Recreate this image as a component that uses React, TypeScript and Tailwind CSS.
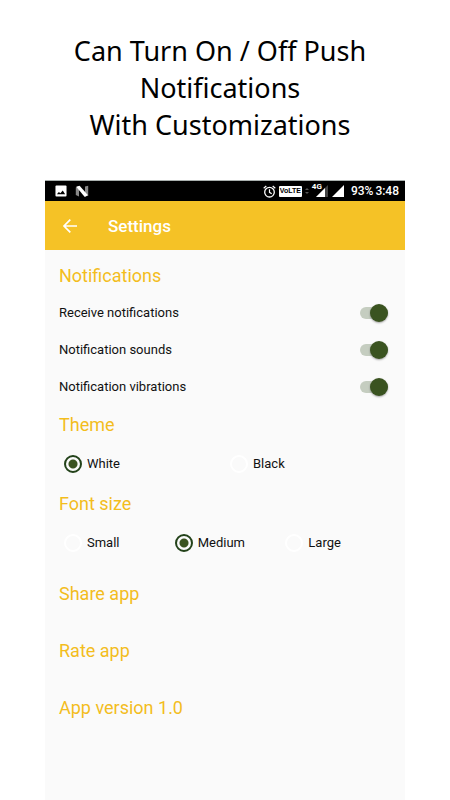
import { useState } from "react";

const SWITCHES = ["Receive notifications", "Notification sounds", "Notification vibrations"];

const StatusBar = () => (
  <div className="flex h-[21px] items-center border-t border-[#a9b0ae] bg-black pl-[10px] pr-[6px] text-white">
    <svg className="h-[12px] w-[12px]" viewBox="0 0 13 13" aria-hidden="true">
      <rect x="0.5" y="0.5" width="12" height="12" rx="1" fill="#fff" />
      <path d="M2 10 4.2 7.5 5.8 9 8.4 6 11 10z" fill="#000" />
    </svg>
    <svg className="ml-2 h-[13px] w-[14px]" viewBox="0 0 14 13" aria-hidden="true">
      <path d="M0.8 2.5 4 1V11.5L0.8 10zM10 1.5 13.2 0.8V11L10 9z" fill="#888" />
      <path d="M1.2 1.8 4.6 0.8 13 10.3 9.8 12z" fill="#fff" />
    </svg>
    <svg className="ml-auto h-[13px] w-[13px]" viewBox="0 0 13 13" fill="none" stroke="#fff" aria-hidden="true">
      <circle cx="6.5" cy="7.2" r="4.8" strokeWidth="1.3" />
      <path d="M6.5 4.3V7.3L8.7 8.7M0.7 3.2 3.3 1M12.3 3.2 9.7 1" strokeWidth="1.2" />
    </svg>
    <span className="ml-[3px] flex h-[11px] w-[23px] items-center justify-center rounded-[1px] bg-white font-['Liberation_Sans',sans-serif] text-[7px] font-bold text-black">
      VoLTE
    </span>
    <svg className="ml-[3px] h-[6px] w-[4px]" viewBox="0 0 4 6" fill="#555" aria-hidden="true">
      <path d="M2 0 4 2H0zM2 6 0 4h4z" />
    </svg>
    <span className="ml-[3px] self-start pt-[2px] text-[8px] leading-[8px] font-bold">4G</span>
    <svg className="-ml-1.5 h-[12px] w-[12px]" viewBox="0 0 12 12" aria-hidden="true">
      <path d="M0 12 12 0V12z" fill="#444" />
      <path d="M0 12 9 3V12z" fill="#fff" />
    </svg>
    <svg className="ml-1 h-[12px] w-[12px]" viewBox="0 0 12 12" aria-hidden="true">
      <path d="M0 12 12 0V12z" fill="#fff" />
    </svg>
    <span className="ml-[7px] text-[12px] font-medium">93%</span>
    <span className="ml-[2px] text-[12px] font-medium">3:48</span>
  </div>
);

const SectionTitle = ({ children }: { children: string }) => (
  <h2 className="flex h-[38px] items-center text-[18px] text-[#f3bd1d]">{children}</h2>
);

const SwitchRow = ({ label }: { label: string }) => {
  const [on, setOn] = useState(true);

  return (
    <label className="flex h-[37px] items-center justify-between pr-[3px] text-[13px]">
      {label}
      <span className="relative flex h-[18px] w-7 items-center">
        <input
          type="checkbox"
          role="switch"
          checked={on}
          onChange={() => setOn(!on)}
          className="peer h-3 w-full appearance-none rounded-full bg-[#ccc] checked:bg-[#c5cdc0]"
        />
        <span className="pointer-events-none absolute top-0 left-0 h-[18px] w-[18px] rounded-full bg-white shadow-[0_1px_2px_rgba(0,0,0,0.35)] peer-checked:right-0 peer-checked:left-auto peer-checked:bg-[#3a5320]" />
      </span>
    </label>
  );
};

type RadioRowProps = {
  name: string;
  options: string[];
  initial: string;
  columns: string;
};

const RadioRow = ({ name, options, initial, columns }: RadioRowProps) => {
  const [value, setValue] = useState(initial);

  return (
    <div role="radiogroup" aria-label={name} className={`grid h-[41px] items-center ${columns}`}>
      {options.map((option) => (
        <label key={option} className="flex items-center gap-[5px] pl-[5px] text-[13px]">
          <input
            type="radio"
            name={name}
            checked={value === option}
            onChange={() => setValue(option)}
            className="h-[18px] w-[18px] appearance-none rounded-full border-2 border-white checked:border-[#23421a] checked:bg-[radial-gradient(circle,#3a5320_4px,transparent_5px)]"
          />
          {option}
        </label>
      ))}
    </div>
  );
};

export default function App() {
  return (
    <div className="flex min-h-screen flex-col bg-white font-[Roboto,sans-serif] text-[#111]">
      <h1 className="pt-8 pr-[10px] pb-[37px] text-center font-['Noto_Sans',sans-serif] text-[27px] leading-[37px] text-black">
        Can Turn On / Off Push
        <br />
        Notifications
        <br />
        With Customizations
      </h1>

      <main className="mx-[10%] flex flex-1 flex-col bg-[#fafafa]">
        <StatusBar />
        <header className="flex h-[49px] items-center bg-[#f5c226] pl-[17px] text-white">
          <button type="button" aria-label="Back">
            <svg className="h-4 w-4" viewBox="0 0 16 16" fill="none" stroke="currentColor" strokeWidth="1.7">
              <path d="M15 8H2.2M8.3 1.7 2 8l6.3 6.3" />
            </svg>
          </button>
          <h2 className="ml-[30px] pt-0.5 text-[17px] font-medium">Settings</h2>
        </header>

        <div className="px-3.5 pt-1.5">
          <SectionTitle>Notifications</SectionTitle>
          {SWITCHES.map((label) => (
            <SwitchRow key={label} label={label} />
          ))}

          <SectionTitle>Theme</SectionTitle>
          <RadioRow name="Theme" options={["White", "Black"]} initial="White" columns="grid-cols-2" />

          <SectionTitle>Font size</SectionTitle>
          <RadioRow
            name="Font size"
            options={["Small", "Medium", "Large"]}
            initial="Medium"
            columns="grid-cols-3"
          />

          <div className="flex flex-col items-start pt-0.5 text-[18px] text-[#f3bd1d]">
            <button type="button" className="h-[57px]">Share app</button>
            <button type="button" className="h-[57px]">Rate app</button>
            <p className="flex h-[57px] items-center">App version 1.0</p>
          </div>
        </div>
      </main>
    </div>
  );
}
